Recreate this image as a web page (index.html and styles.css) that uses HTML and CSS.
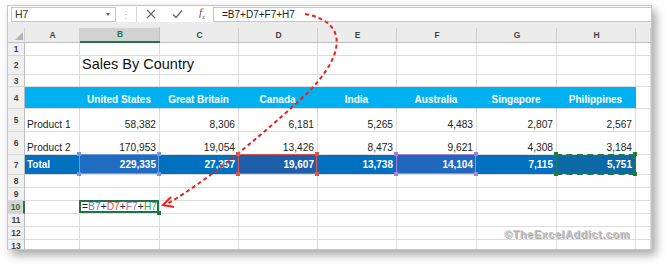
FILE: index.html
```html
<!DOCTYPE html>
<html lang="en">
  <head>
    <meta charset="UTF-8" />
    <title>Sales By Country</title>
    <link rel="stylesheet" href="styles.css">
  </head>
  <body>
    <div class="page">
      <div class="window">
        <div class="formula-bar">
          <div class="name-box">H7<span class="drop"></span></div>
          <div class="grip">&#8942;</div>
          <div class="fx-buttons">
            <svg width="10" height="10" viewBox="0 0 10 10"><path d="M1 1L9 9M9 1L1 9" stroke="#666" stroke-width="1.2" fill="none"/></svg>
            <svg width="11" height="10" viewBox="0 0 11 10"><path d="M1 5.5L4 8.5L10 1.5" stroke="#666" stroke-width="1.2" fill="none"/></svg>
            <span class="fx">f<sub>x</sub></span>
          </div>
          <div class="formula-input">=B7+D7+F7+H7</div>
        </div>

        <div class="sheet">
          <!-- column headers -->
          <div class="corner"><span class="tri"></span></div>
          <div class="ch">A</div>
          <div class="ch sel">B</div>
          <div class="ch">C</div>
          <div class="ch">D</div>
          <div class="ch">E</div>
          <div class="ch">F</div>
          <div class="ch">G</div>
          <div class="ch">H</div>
          <div class="ch"></div>

          <!-- row 1 -->
          <div class="rh">1</div>
          <div class="c"></div><div class="c"></div><div class="c"></div><div class="c"></div><div class="c"></div><div class="c"></div><div class="c"></div><div class="c"></div><div class="c"></div>

          <!-- row 2 -->
          <div class="rh">2</div>
          <div class="c"></div>
          <div class="c title">Sales By Country</div>
          <div class="c"></div><div class="c"></div><div class="c"></div><div class="c"></div><div class="c"></div><div class="c"></div><div class="c"></div>

          <!-- row 3 -->
          <div class="rh">3</div>
          <div class="c"></div><div class="c"></div><div class="c"></div><div class="c"></div><div class="c"></div><div class="c"></div><div class="c"></div><div class="c"></div><div class="c"></div>

          <!-- row 4 -->
          <div class="rh">4</div>
          <div class="c band"></div>
          <div class="c band">United States</div>
          <div class="c band">Great Britain</div>
          <div class="c band">Canada</div>
          <div class="c band">India</div>
          <div class="c band">Australia</div>
          <div class="c band">Singapore</div>
          <div class="c band">Philippines</div>
          <div class="c"></div>

          <!-- row 5 -->
          <div class="rh">5</div>
          <div class="c data">Product 1</div>
          <div class="c data num">58,382</div>
          <div class="c data num">8,306</div>
          <div class="c data num">6,181</div>
          <div class="c data num">5,265</div>
          <div class="c data num">4,483</div>
          <div class="c data num">2,807</div>
          <div class="c data num">2,567</div>
          <div class="c"></div>

          <!-- row 6 -->
          <div class="rh">6</div>
          <div class="c data">Product 2</div>
          <div class="c data num">170,953</div>
          <div class="c data num">19,054</div>
          <div class="c data num">13,426</div>
          <div class="c data num">8,473</div>
          <div class="c data num">9,621</div>
          <div class="c data num">4,308</div>
          <div class="c data num">3,184</div>
          <div class="c"></div>

          <!-- row 7 -->
          <div class="rh">7</div>
          <div class="c total">Total</div>
          <div class="c total num ref ref-blue">229,335</div>
          <div class="c total num">27,357</div>
          <div class="c total num ref ref-red">19,607</div>
          <div class="c total num">13,738</div>
          <div class="c total num ref ref-purple">14,104</div>
          <div class="c total num">7,115</div>
          <div class="c total num ref ref-green">5,751</div>
          <div class="c"></div>

          <!-- row 8 -->
          <div class="rh">8</div>
          <div class="c"></div><div class="c"></div><div class="c"></div><div class="c"></div><div class="c"></div><div class="c"></div><div class="c"></div><div class="c"></div><div class="c"></div>

          <!-- row 9 -->
          <div class="rh">9</div>
          <div class="c"></div><div class="c"></div><div class="c"></div><div class="c"></div><div class="c"></div><div class="c"></div><div class="c"></div><div class="c"></div><div class="c"></div>

          <!-- row 10 -->
          <div class="rh sel">10</div>
          <div class="c"></div>
          <div class="c active"><span>=</span><span class="f-blue">B7</span><span>+</span><span class="f-red">D7</span><span>+</span><span class="f-purple">F7</span><span>+</span><span class="f-green">H7</span></div>
          <div class="c"></div><div class="c"></div><div class="c"></div><div class="c"></div><div class="c"></div><div class="c"></div><div class="c"></div>

          <!-- row 11 -->
          <div class="rh">11</div>
          <div class="c"></div><div class="c"></div><div class="c"></div><div class="c"></div><div class="c"></div><div class="c"></div><div class="c"></div><div class="c"></div><div class="c"></div>

          <!-- row 12 -->
          <div class="rh">12</div>
          <div class="c"></div><div class="c"></div><div class="c"></div><div class="c"></div><div class="c"></div><div class="c"></div><div class="c"></div><div class="c"></div><div class="c"></div>

          <!-- row 13 -->
          <div class="rh">13</div>
          <div class="c"></div><div class="c"></div><div class="c"></div><div class="c"></div><div class="c"></div><div class="c"></div><div class="c"></div><div class="c"></div><div class="c"></div>
        </div>
      </div>

      <div class="watermark">&copy;TheExcelAddict.com</div>

      <!-- red dashed arrow from the formula bar to B10 -->
      <svg class="arrow" width="669" height="268" viewBox="0 0 669 268">
        <path d="M305 14 C350 22 346 58 300 100 S205 182 167 204" stroke="#e8211d" stroke-width="2" stroke-dasharray="4 3" fill="none"/>
        <path d="M171 197 L163 205 L174 207" stroke="#e8211d" stroke-width="2" fill="none"/>
      </svg>
    </div>
  </body>
</html>
```
FILE: styles.css
```css
body {
  margin: 0;
  background: #fff;
  font-family: "Liberation Sans", Arial, sans-serif;
  color: #222;
}
.page {
  position: relative;
  width: 669px;
  height: 268px;
  overflow: hidden;
}
.window {
  margin: 5px 0 0 7px;
  width: 643px;
  height: 243px;
  border: 1px solid #c6c6c6;
  box-shadow: 4px 5px 9px rgba(0, 0, 0, 0.35);
  overflow: hidden;
  background: #fff;
}

/* formula bar */
.formula-bar {
  height: 16px;
  display: flex;
  align-items: center;
  background: #fff;
  padding-left: 3px;
}
.name-box {
  width: 100px;
  height: 13px;
  border: 1px solid #c6c6c6;
  font-size: 10.5px;
  line-height: 13px;
  padding-left: 3px;
  display: flex;
  justify-content: space-between;
  align-items: center;
  color: #333;
}
.drop {
  width: 0;
  height: 0;
  border-left: 2.5px solid transparent;
  border-right: 2.5px solid transparent;
  border-top: 3px solid #666;
  margin-right: 5px;
}
.grip {
  width: 20px;
  text-align: center;
  color: #bbb;
  font-size: 10px;
}
.fx-buttons {
  width: 77px;
  height: 15px;
  border-left: 1px solid #d4d4d4;
  display: flex;
  align-items: center;
  gap: 16px;
  padding-left: 9px;
  box-sizing: border-box;
}
.fx {
  font-family: "Liberation Serif", serif;
  font-style: italic;
  font-size: 11px;
  color: #555;
}
.fx sub {
  font-size: 7px;
}
.formula-input {
  flex: 1;
  height: 13px;
  border: 1px solid #c6c6c6;
  border-right: none;
  font-size: 10px;
  line-height: 13px;
  padding-left: 8px;
  color: #222;
}

/* grid */
.sheet {
  display: grid;
  grid-template-columns: 17px 55px 80px 79px 79px 79px 80px 80px 79px 15px;
  grid-template-rows: 21px 13px 19px 12px 22px 23px 23px 20px 13px 13px 13px 13px 13px 13px;
}
.c {
  border-right: 1px solid #dcdcdc;
  border-bottom: 1px solid #dcdcdc;
  display: flex;
  align-items: flex-end;
  font-size: 10.2px;
  line-height: 12px;
  padding: 0 3px 0 2px;
  white-space: nowrap;
  min-width: 0;
}
.corner,
.ch {
  background: linear-gradient(#cfcfcf, #cfcfcf) right bottom / 1px 14px no-repeat, #ececec;
  border-bottom: 1px solid #bdbdbd;
  display: flex;
  align-items: flex-end;
  justify-content: center;
  font-size: 8.5px;
  font-weight: bold;
  color: #444;
  padding-bottom: 2px;
  box-sizing: border-box;
}
.corner {
  position: relative;
  justify-content: flex-end;
  padding: 0 2px 2px 0;
}
.tri {
  width: 0;
  height: 0;
  border-left: 8px solid transparent;
  border-bottom: 8px solid #b4b4b4;
}
.ch.sel {
  background: linear-gradient(#c0c0c0, #c0c0c0) right bottom / 1px 14px no-repeat,
    linear-gradient(#d2d2d2, #d2d2d2) left bottom / 100% 13px no-repeat, #ececec;
  border-bottom: 2px solid #217346;
  color: #217346;
}
.rh {
  background: #f0f0f0;
  border-right: 1px solid #bdbdbd;
  border-bottom: 1px solid #d6d6d6;
  font-size: 8.5px;
  font-weight: bold;
  color: #444;
  display: flex;
  align-items: center;
  justify-content: center;
}
.rh.sel {
  background: #d4d4d4;
  border-right: 2px solid #217346;
  color: #217346;
}
.title {
  font-size: 14.5px;
  line-height: 16px;
  overflow: visible;
  padding-bottom: 2px;
  color: #111;
}
.band {
  background: #00b0f0;
  border-right-color: #00b0f0;
  color: #fff;
  font-weight: bold;
  font-size: 10px;
  line-height: 12px;
  justify-content: center;
  padding-bottom: 2px;
}
.data {
  color: #222;
}
.num {
  justify-content: flex-end;
}
.total {
  background: #0070c0;
  border-right-color: #0070c0;
  border-bottom-color: #dcdcdc;
  color: #fff;
  font-weight: bold;
  font-size: 10px;
  padding-bottom: 3px;
}

/* highlighted formula references */
.ref {
  position: relative;
}
.ref::after {
  content: "";
  position: absolute;
  inset: -1px 0 0 -1px;
  border: 1px solid var(--ref);
}
.ref::before {
  content: "";
  position: absolute;
  inset: -3px -2px -2px -3px;
  background:
    linear-gradient(var(--ref), var(--ref)) left top / 4px 4px no-repeat,
    linear-gradient(var(--ref), var(--ref)) right top / 4px 4px no-repeat,
    linear-gradient(var(--ref), var(--ref)) left bottom / 4px 4px no-repeat,
    linear-gradient(var(--ref), var(--ref)) right bottom / 4px 4px no-repeat;
  z-index: 1;
}
.ref-blue {
  --ref: #6f9be0;
  background: #1f6cc0;
}
.ref-red {
  --ref: #e0524e;
  background: #1f5ea8;
}
.ref-purple {
  --ref: #a880d8;
  background: #2168be;
}
.ref-green {
  --ref: #1e7b3a;
  background: #0b6aa6;
}
.ref-green::after {
  border: 2px dashed #1e7b3a;
  inset: -1px 0 -1px -1px;
}

/* cell being edited */
.active {
  position: relative;
  font-size: 10.3px;
  line-height: 12px;
  padding: 0 0 0 2px;
  color: #222;
}
.active::after {
  content: "";
  position: absolute;
  inset: -1px 0 0 -1px;
  border: 2px solid #217346;
}
.active::before {
  content: "";
  position: absolute;
  right: -2px;
  bottom: -2px;
  width: 4px;
  height: 4px;
  background: #217346;
  z-index: 1;
}
.f-blue { color: #4f81d6; }
.f-red { color: #e0504d; }
.f-purple { color: #9b72d0; }
.f-green { color: #3e9a4c; }

.watermark {
  position: absolute;
  left: 504px;
  top: 228px;
  font-size: 11px;
  font-weight: bold;
  letter-spacing: 0.5px;
  color: #c4c4c4;
  text-shadow: 1px 1px 0 #a8a8a8;
}
.arrow {
  position: absolute;
  left: 0;
  top: 0;
  pointer-events: none;
}
```
